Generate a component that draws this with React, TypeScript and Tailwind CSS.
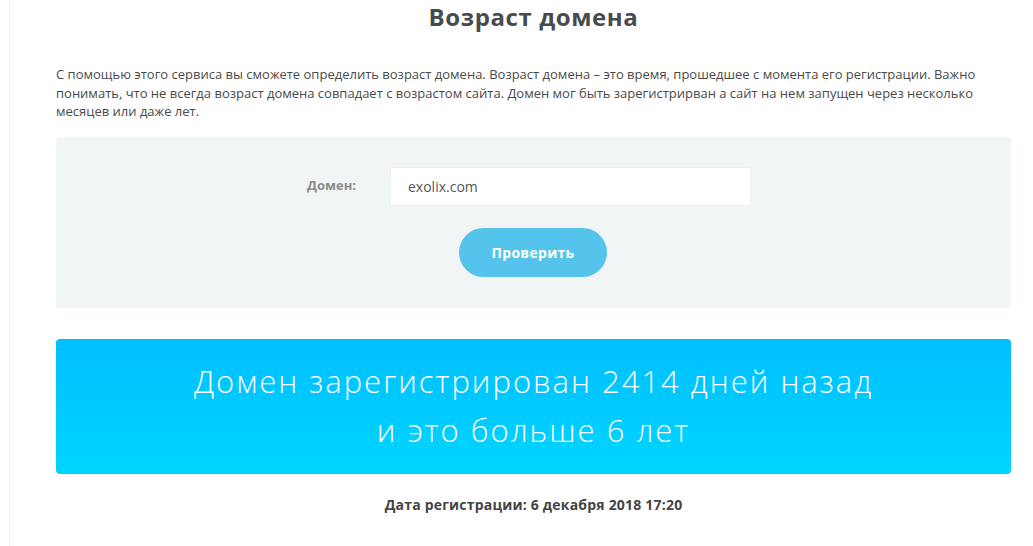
import React from 'react';

export default function App() {
  return (
    <div className="min-h-[546px] bg-white font-['Open_Sans',sans-serif]">
      <div className="ml-[9px] min-h-[546px] border-l border-[#eef1f1] pl-[46px]">
        <div className="w-[955px]">
          {/* Title */}
          <h1 className="pt-[3px] text-center text-[24px] font-bold leading-[28px] tracking-[0.6px] text-[#474a4e]">
            Возраст домена
          </h1>

          {/* Description */}
          <p className="mt-[34px] pr-[10px] text-[13px] font-medium leading-[18.5px] text-[#4a4a4a]">
            С помощью этого сервиса вы сможете определить возраст домена. Возраст домена – это время, прошедшее с момента его регистрации. Важно понимать, что не всегда возраст домена совпадает с возрастом сайта. Домен мог быть зарегистрирван а сайт на нем запущен через несколько месяцев или даже лет.
          </p>

          {/* Form */}
          <div className="mt-[16px] h-[171px] rounded-[4px] bg-[#f2f5f6] pt-[30px]">
            <div className="flex items-center">
              <label className="w-[300px] text-right text-[13px] font-bold text-[#8a8a8a]">Домен:</label>
              <input
                defaultValue="exolix.com"
                className="ml-[34px] h-[39px] w-[361px] border border-[#eef0f0] bg-white px-[17px] text-[14px] text-[#555] outline-none"
              />
            </div>
            <div className="mt-[22px] flex">
              <button className="ml-[403px] h-[49px] w-[148px] rounded-full bg-[#55c4ec] text-[14px] font-bold tracking-[0.3px] text-white">
                Проверить
              </button>
            </div>
          </div>

          {/* Result */}
          <div className="mt-[31px] flex h-[135px] flex-col items-center justify-center rounded-[4px] bg-gradient-to-b from-[#00bfff] to-[#00d5ff] text-white">
            <div className="text-[31px] font-light leading-[49px] tracking-[2px]">Домен зарегистрирован 2414 дней назад</div>
            <div className="text-[31px] font-light leading-[49px] tracking-[2px]">и это больше 6 лет</div>
          </div>

          <div className="mt-[20px] text-center text-[14px] font-bold tracking-[0.2px] text-[#444]">
            Дата регистрации: 6 декабря 2018 17:20
          </div>
        </div>
      </div>
    </div>
  );
}
